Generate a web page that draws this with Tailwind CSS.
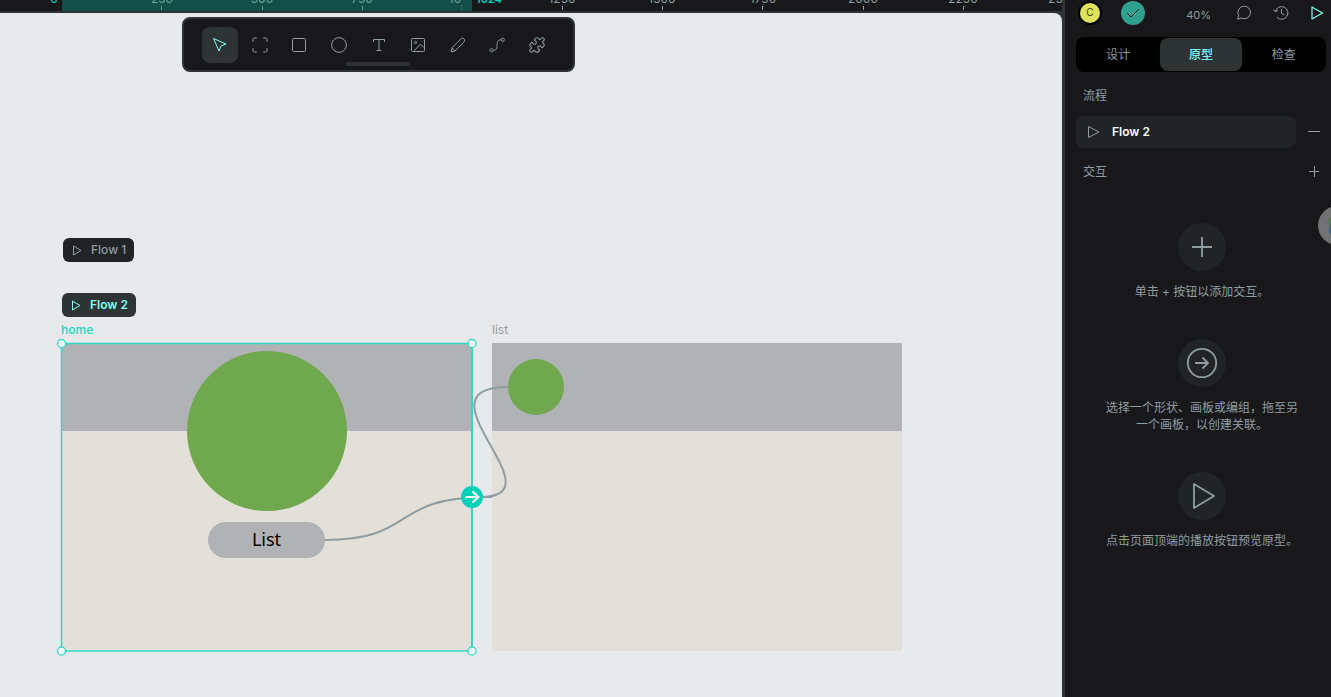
<!DOCTYPE html>
<html lang="zh-CN">
<head>
    <meta charset="UTF-8">
    <meta name="viewport" content="width=device-width, initial-scale=1.0">
    <title>Prototype</title>
    <script src="https://cdn.jsdelivr.net/npm/@tailwindcss/browser@4"></script>
</head>
<body class="bg-[#18181a] font-['Inter','Noto_Sans_CJK_SC',sans-serif] text-xs text-[#8f9da3]">
    <div class="flex h-screen overflow-hidden">
        <main class="flex flex-col flex-1 min-w-0 border-r-3 border-[#2e3434]">
            <!-- Ruler -->
            <svg class="w-full h-[11px] shrink-0 block" font-size="12">
                <rect x="62" width="410" height="11" fill="#124f48"/>
                <g stroke="#8f9da3">
                    <path d="M562.5 6v4M662.5 6v4M762.5 6v4M863.5 6v4M963.5 6v4"/>
                    <path d="M161.5 6v4M262.5 6v4M362.5 6v4" stroke="#5f9c93"/>
                    <path d="M461.5 5v5" stroke="#2f6b64"/>
                </g>
                <g fill="#6fa39c" text-anchor="middle">
                    <text x="162" y="3">250</text>
                    <text x="262" y="3">500</text>
                    <text x="362" y="3">750</text>
                    <text x="455" y="3">10</text>
                </g>
                <g fill="#8f9da3" text-anchor="middle">
                    <text x="562" y="3">1250</text>
                    <text x="662" y="3">1500</text>
                    <text x="763" y="3">1750</text>
                    <text x="863" y="3">2000</text>
                    <text x="963" y="3">2250</text>
                    <text x="1063" y="3">2500</text>
                </g>
                <g fill="#00d1b8" text-anchor="middle">
                    <text x="54" y="3">0</text>
                    <text x="489" y="3" font-size="11" font-weight="600">1024</text>
                </g>
            </svg>

            <!-- Canvas -->
            <div class="relative flex-1 border-t-2 border-[#2e3434] bg-[#2e3434]">
                <div class="absolute inset-0 bg-[#e8e9eb] rounded-tr-lg overflow-hidden">
                    <!-- Toolbar -->
                    <div class="absolute left-[182px] top-1 w-[393px] h-[55px] px-[18px] flex items-center justify-between bg-[#18181a] border-2 border-[#2e3434] rounded-lg">
                        <button aria-label="Move" class="size-9 rounded-lg bg-[#2e3434] flex items-center justify-center">
                            <svg class="size-4" viewBox="0 0 16 16" fill="none" stroke="#7efff5" stroke-linejoin="round"><path d="M1.500 1.500l12.500 5.500-5 2-2 5z"/></svg>
                        </button>
                        <button aria-label="Board" class="size-9 flex items-center justify-center">
                            <svg class="size-4" viewBox="0 0 16 16" fill="none" stroke="#8f9da3" stroke-linecap="round"><path d="M1 4.500V2.500Q1 1 2.500 1H4.500M11.500 1H13.500Q15 1 15 2.500V4.500M15 11.500V13.500Q15 15 13.500 15H11.500M4.500 15H2.500Q1 15 1 13.500V11.500"/></svg>
                        </button>
                        <button aria-label="Rectangle" class="size-9 flex items-center justify-center">
                            <svg class="size-4" viewBox="0 0 16 16" fill="none" stroke="#8f9da3"><rect x="1.500" y="1.500" width="13" height="13" rx="1"/></svg>
                        </button>
                        <button aria-label="Ellipse" class="size-9 flex items-center justify-center">
                            <svg class="size-4" viewBox="0 0 16 16" fill="none" stroke="#8f9da3"><circle cx="8" cy="8" r="7.400"/></svg>
                        </button>
                        <button aria-label="Text" class="size-9 flex items-center justify-center">
                            <svg class="size-4" viewBox="0 0 16 16" fill="none" stroke="#8f9da3"><path d="M2.500 5V2.500h11V5M8 2.500v11M5.500 13.500h5"/></svg>
                        </button>
                        <button aria-label="Image" class="size-9 flex items-center justify-center">
                            <svg class="size-4" viewBox="0 0 16 16" fill="none" stroke="#8f9da3" stroke-linejoin="round"><rect x="1.500" y="1.500" width="13" height="13" rx="1"/><circle cx="5.500" cy="5.500" r="1.200"/><path d="M3.500 14.500l7-7.500 4 4"/></svg>
                        </button>
                        <button aria-label="Pencil" class="size-9 flex items-center justify-center">
                            <svg class="size-4" viewBox="0 0 16 16" fill="none" stroke="#8f9da3" stroke-linejoin="round"><path d="M1.200 14.800l.8-4L11.200 1.600q1.300-1.200 2.600 0t.4 3L5 14zM2 10.800L5 14"/></svg>
                        </button>
                        <button aria-label="Path" class="size-9 flex items-center justify-center">
                            <svg class="size-4" viewBox="0 0 16 16" fill="none" stroke="#8f9da3"><circle cx="2.500" cy="13.300" r="1.600"/><circle cx="13.700" cy="2.700" r="1.600"/><path d="M4.200 13.300C8 13.500 8 11 8 8.500S8.500 2.700 12 2.700"/></svg>
                        </button>
                        <button aria-label="Plugins" class="size-9 flex items-center justify-center">
                            <svg class="size-4" viewBox="1 1 22 22" fill="none" stroke="#8f9da3" stroke-width="1.500" stroke-linecap="round" stroke-linejoin="round"><path d="M19.439 7.850c-.049.322.059.648.289.878l1.568 1.568c.47.47.706 1.087.706 1.704s-.235 1.233-.706 1.704l-1.611 1.611a.98.98 0 0 1-.837.276c-.47-.07-.802-.48-.968-.925a2.501 2.501 0 1 0-3.214 3.214c.446.166.855.497.925.968a.979.979 0 0 1-.276.837l-1.610 1.610a2.404 2.404 0 0 1-1.705.707 2.402 2.402 0 0 1-1.704-.706l-1.568-1.568a1.026 1.026 0 0 0-.877-.290c-.493.074-.840.504-1.020.968a2.500 2.500 0 1 1-3.237-3.237c.464-.180.894-.527.967-1.020a1.026 1.026 0 0 0-.289-.877l-1.568-1.568A2.402 2.402 0 0 1 1.998 12c0-.617.236-1.234.706-1.704L4.230 8.770c.240-.240.581-.353.917-.303.515.077.877.528 1.073 1.010a2.500 2.500 0 1 0 3.259-3.259c-.482-.196-.933-.558-1.010-1.073-.050-.336.062-.676.303-.917l1.525-1.525A2.402 2.402 0 0 1 12 1.998c.617 0 1.234.236 1.704.706l1.568 1.568c.230.230.556.338.877.290.493-.074.840-.504 1.020-.968a2.500 2.500 0 1 1 3.237 3.237c-.464.180-.894.527-.967 1.020z"/></svg>
                        </button>
                        <div class="absolute left-[162px] bottom-1 w-16 h-1 rounded-full bg-[#2e3434]"></div>
                    </div>

                    <!-- Flow labels -->
                    <div class="absolute left-[63px] top-[225px] h-6 px-2 flex items-center gap-2 rounded-md bg-[#212426] font-medium text-[#8f9da3]">
                        <svg class="size-3" viewBox="0 0 12 12" fill="none" stroke="#8f9da3" stroke-linejoin="round"><path d="M2.500 2v9l7.500-4.500z"/></svg>
                        Flow 1
                    </div>
                    <div class="absolute left-[62px] top-[280px] h-6 px-2 flex items-center gap-2 rounded-md bg-[#2e3434] font-semibold text-[#7efff5]">
                        <svg class="size-3" viewBox="0 0 12 12" fill="none" stroke="#7efff5" stroke-linejoin="round"><path d="M2.500 2v9l7.500-4.500z"/></svg>
                        Flow 2
                    </div>

                    <!-- Boards -->
                    <div class="absolute left-[61px] top-[309px] leading-4 font-medium text-[#1fd6c1]">home</div>
                    <div class="absolute left-[62px] top-[330px] w-[410px] h-[308px] bg-[#e3e0d9]">
                        <div class="h-[88px] bg-[#b1b2b5]"></div>
                        <div class="absolute left-[125px] top-2 size-40 rounded-full bg-[#6fa84d]"></div>
                        <div class="absolute left-[146px] top-[179px] w-[117px] h-9 pb-0.5 flex items-center justify-center rounded-full bg-[#b1b2b5] font-['Noto_Sans',sans-serif] text-lg text-black">List</div>
                    </div>
                    <div class="absolute left-[492px] top-[309px] leading-4 text-[#8f9da3]">list</div>
                    <div class="absolute left-[492px] top-[330px] w-[410px] h-[308px] bg-[#e3e0d9]">
                        <div class="h-[88px] bg-[#b1b2b5]"></div>
                        <div class="absolute left-4 top-4 size-14 rounded-full bg-[#6fa84d]"></div>
                    </div>

                    <!-- Selection and connections -->
                    <svg class="absolute left-0 top-0" width="920" height="660" viewBox="0 13 920 660" fill="none">
                        <g stroke="#8f9da3" stroke-width="2">
                            <path d="M325 540C415 540 390 499 482 497"/>
                            <path d="M508 387C412 387 560 495 482 497H492"/>
                        </g>
                        <path d="M61.500 343.500H472V651H61.500z" stroke="#31d9c5" stroke-width="1.500"/>
                        <path d="M472 343V651" stroke="#31d9c5" stroke-width="2"/>
                        <g fill="#fff" stroke="#31d9c5" stroke-width="1.300">
                            <circle cx="61.500" cy="343.500" r="4"/>
                            <circle cx="472" cy="343.500" r="4"/>
                            <circle cx="61.500" cy="651" r="4"/>
                            <circle cx="472" cy="651" r="4"/>
                        </g>
                        <circle cx="472" cy="497" r="11" fill="#00d1b8"/>
                        <path d="M465.500 497h13M472.500 491.500l6 5.500-6 5.500" stroke="#fff" stroke-width="2"/>
                    </svg>
                </div>
            </div>
        </main>

        <aside class="relative w-[266px] shrink-0 pl-[11px] pr-[5px] overflow-hidden">
            <header class="h-[26px] flex items-center justify-between pl-1">
                <div class="flex items-center gap-[21px]">
                    <span class="size-5 rounded-full bg-[#dde45c] ring-2 ring-black flex items-center justify-center text-[10px] text-[#3a3c20]">C</span>
                    <span class="size-6 rounded-full bg-[#2f9f8e] flex items-center justify-center">
                        <svg class="size-4" viewBox="0 0 16 16" fill="none" stroke="#18181a" stroke-linecap="round" stroke-linejoin="round"><path d="M2.500 8.500l3.500 3.500 7.500-7.500"/></svg>
                    </span>
                </div>
                <div class="flex items-center gap-[21px]">
                    <button class="pt-1 pr-1 text-[11px] leading-4">40%</button>
                    <button aria-label="Comments"><svg class="size-4 block" viewBox="0 0 16 16" fill="none" stroke="#8f9da3" stroke-linejoin="round"><path d="M1.500 14.200l1.200-3.700A6.300 6.300 0 1 1 5.200 13z"/></svg></button>
                    <button aria-label="History"><svg class="size-4 block" viewBox="0 0 16 16" fill="none" stroke="#8f9da3" stroke-linecap="round" stroke-linejoin="round"><path d="M2.300 6.500A6.400 6.400 0 1 1 4 12.500M.6 4.800l1.700 2 2.300-1.300M8.500 4.500V8.500l2.500 1.300"/></svg></button>
                    <button aria-label="Play"><svg class="size-4 block" viewBox="0 0 16 16" fill="none" stroke="#7efff5" stroke-width="1.200" stroke-linejoin="round"><path d="M2 2v12l10.500-6z"/></svg></button>
                </div>
            </header>

            <nav class="mt-[11px] h-[35px] p-px flex rounded-lg bg-black">
                <button class="flex-1 rounded-lg">设计</button>
                <button class="flex-1 rounded-lg bg-[#2e3434] font-medium text-[#7efff5]">原型</button>
                <button class="flex-1 rounded-lg">检查</button>
            </nav>

            <section>
                <h2 class="mt-4 pl-[7px] leading-4">流程</h2>
                <div class="mt-3 flex items-center justify-between pr-[6px]">
                    <button class="w-[220px] h-8 pl-3 flex items-center gap-3 rounded-lg bg-[#212426] font-semibold text-white">
                        <svg class="size-3" viewBox="0 0 12 12" fill="none" stroke="#8f9da3" stroke-linejoin="round"><path d="M.5.500v11l10.500-5.500z"/></svg>
                        Flow 2
                    </button>
                    <button aria-label="Remove"><svg class="size-3 block" viewBox="0 0 12 12" stroke="#8f9da3"><path d="M0 5.500h12"/></svg></button>
                </div>
            </section>

            <section>
                <div class="mt-4 h-4 pl-[7px] pr-[6px] flex items-center justify-between">
                    <h2 class="leading-4">交互</h2>
                    <button aria-label="Add"><svg class="size-3 block" viewBox="0 0 12 12" stroke="#8f9da3"><path d="M1 5.500h10M6.500 0v11"/></svg></button>
                </div>
                <div class="mt-[43px] pl-0.5 flex flex-col gap-[39px] text-center leading-[17px]">
                    <div class="flex flex-col items-center gap-3">
                        <span class="size-12 rounded-full bg-[#212426] flex items-center justify-center">
                            <svg class="size-6" viewBox="0 0 24 24" stroke="#8f9da3" stroke-width="1.800"><path d="M2 12h20M12 2v20"/></svg>
                        </span>
                        <p>单击 + 按钮以添加交互。</p>
                    </div>
                    <div class="flex flex-col items-center gap-3">
                        <span class="size-12 rounded-full bg-[#212426] flex items-center justify-center">
                            <svg class="size-8" viewBox="0 0 32 32" fill="none" stroke="#8f9da3" stroke-width="1.800"><circle cx="16" cy="16" r="14.200"/><path d="M9 16h13M16.500 10.500L22 16l-5.500 5.500"/></svg>
                        </span>
                        <p class="w-[200px]">选择一个形状、画板或编组，拖至另一个画板，以创建关联。</p>
                    </div>
                    <div class="flex flex-col items-center gap-3">
                        <span class="size-12 rounded-full bg-[#212426] flex items-center justify-center">
                            <svg class="size-7" viewBox="0 0 28 28" fill="none" stroke="#8f9da3" stroke-width="1.800" stroke-linejoin="round"><path d="M6 2v24l20-12z"/></svg>
                        </span>
                        <p>点击页面顶端的播放按钮预览原型。</p>
                    </div>
                </div>
            </section>

            <!-- Floating widget docked at the window edge -->
            <div class="absolute top-[206px] -right-[26px] size-[39px] rounded-full bg-[#727274]">
                <div class="absolute left-[11px] top-[10px] size-[19px] rounded-sm bg-linear-to-b from-[#5f7a2b] to-[#1c6580]"></div>
            </div>
        </aside>
    </div>
</body>
</html>
